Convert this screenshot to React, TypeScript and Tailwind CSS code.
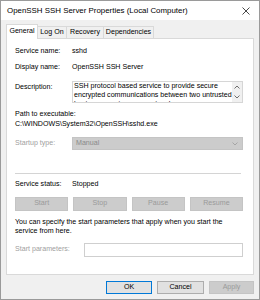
import React from "react";

const font = { fontFamily: '"Liberation Sans", Arial, sans-serif' };

export default function App() {
  return (
    <div
      className="w-[260px] h-[300px] bg-[#f0f0f0] border border-[#9a9a9a] flex flex-col text-[7.1px] text-black overflow-hidden"
      style={font}
    >
      {/* Title bar */}
      <div className="h-[19px] bg-white flex items-center justify-between pl-[6px] pr-[9px] shrink-0">
        <span className="text-[7.9px] leading-none">OpenSSH SSH Server Properties (Local Computer)</span>
        <svg width="8" height="8" viewBox="0 0 8 8">
          <path d="M0.5 0.5 L7.5 7.5 M7.5 0.5 L0.5 7.5" stroke="#333" strokeWidth="0.9" />
        </svg>
      </div>

      {/* Tabs */}
      <div className="flex items-end pl-[5px] mt-[4px] h-[14px] shrink-0 relative z-10">
        <div className="h-[15px] w-[32px] bg-white border border-b-0 border-[#d9d9d9] flex items-center justify-center leading-none mb-[-1px]">
          General
        </div>
        <div className="h-[12px] w-[29px] border border-l-0 border-b-0 border-[#d9d9d9] flex items-center justify-center leading-none">
          Log On
        </div>
        <div className="h-[12px] w-[37px] border border-l-0 border-b-0 border-[#d9d9d9] flex items-center justify-center leading-none">
          Recovery
        </div>
        <div className="h-[12px] w-[50px] border border-l-0 border-b-0 border-[#d9d9d9] flex items-center justify-center leading-none">
          Dependencies
        </div>
      </div>

      {/* Panel */}
      <div className="mx-[5px] h-[237px] bg-white border border-[#d9d9d9] pl-[8px] pr-[10px] pt-[8px] flex flex-col shrink-0">
        <div className="flex h-[10px] items-center leading-none">
          <span className="w-[57px]">Service name:</span>
          <span>sshd</span>
        </div>
        <div className="flex h-[10px] items-center leading-none mt-[6px]">
          <span className="w-[57px]">Display name:</span>
          <span>OpenSSH SSH Server</span>
        </div>
        <div className="flex mt-[8px]">
          <span className="w-[57px] mt-[3px] leading-none">Description:</span>
          <div className="flex-1 h-[22px] border border-[#d6d6d6] flex overflow-hidden">
            <div className="flex-1 leading-[9px] pl-[1px] overflow-hidden">
              SSH protocol based service to provide secure encrypted communications between two untrusted hosts over an insecure network.
            </div>
            <div className="w-[10px] flex flex-col items-center justify-between py-[3px] bg-[#f0f0f0]">
              <svg width="6" height="4" viewBox="0 0 6 4">
                <path d="M0.5 3.5 L3 1 L5.5 3.5" stroke="#606060" strokeWidth="0.9" fill="none" />
              </svg>
              <svg width="6" height="4" viewBox="0 0 6 4">
                <path d="M0.5 0.5 L3 3 L5.5 0.5" stroke="#606060" strokeWidth="0.9" fill="none" />
              </svg>
            </div>
          </div>
        </div>
        <div className="h-[10px] flex items-center leading-none mt-[7px]">Path to executable:</div>
        <div className="h-[10px] flex items-center leading-none">C:\WINDOWS\System32\OpenSSH\sshd.exe</div>
        <div className="flex items-center mt-[7px]">
          <span className="w-[57px] leading-none text-[#a0a0a0]">Startup type:</span>
          <div className="flex-1 h-[13px] bg-[#cccccc] border border-[#c4c4c4] flex items-center justify-between pl-[3px] pr-[4px] text-[#8a8a8a] leading-none">
            <span>Manual</span>
            <svg width="6" height="4" viewBox="0 0 6 4">
              <path d="M0.5 0.5 L3 3 L5.5 0.5" stroke="#a0a0a0" strokeWidth="0.9" fill="none" />
            </svg>
          </div>
        </div>
        <div className="h-px bg-[#d4d4d4] mt-[23px] mr-[2px]" />
        <div className="flex h-[10px] items-center leading-none mt-[6px]">
          <span className="w-[57px]">Service status:</span>
          <span>Stopped</span>
        </div>
        <div className="grid grid-cols-4 gap-[5px] mt-[7px]">
          {["Start", "Stop", "Pause", "Resume"].map((b) => (
            <div
              key={b}
              className="h-[14px] bg-[#cccccc] border border-[#c4c4c4] flex items-center justify-center text-[#9a9a9a] leading-none"
            >
              {b}
            </div>
          ))}
        </div>
        <div className="leading-[9px] mt-[7px]">
          You can specify the start parameters that apply when you start the service from here.
        </div>
        <div className="flex items-center mt-[7px]">
          <span className="w-[69px] leading-none text-[#a0a0a0]">Start parameters:</span>
          <div className="flex-1 h-[14px] bg-white border border-[#cfcfcf]" />
        </div>
      </div>

      {/* Bottom buttons */}
      <div className="flex justify-end gap-[5px] pr-[5px] mt-[6px]">
        <div className="w-[46px] h-[13px] bg-[#e1e1e1] border border-[#0078d7] flex items-center justify-center leading-none">
          OK
        </div>
        <div className="w-[47px] h-[13px] bg-[#e1e1e1] border border-[#adadad] flex items-center justify-center leading-none">
          Cancel
        </div>
        <div className="w-[45px] h-[13px] bg-[#cccccc] border border-[#c4c4c4] flex items-center justify-center leading-none text-[#9a9a9a]">
          Apply
        </div>
      </div>
    </div>
  );
}
